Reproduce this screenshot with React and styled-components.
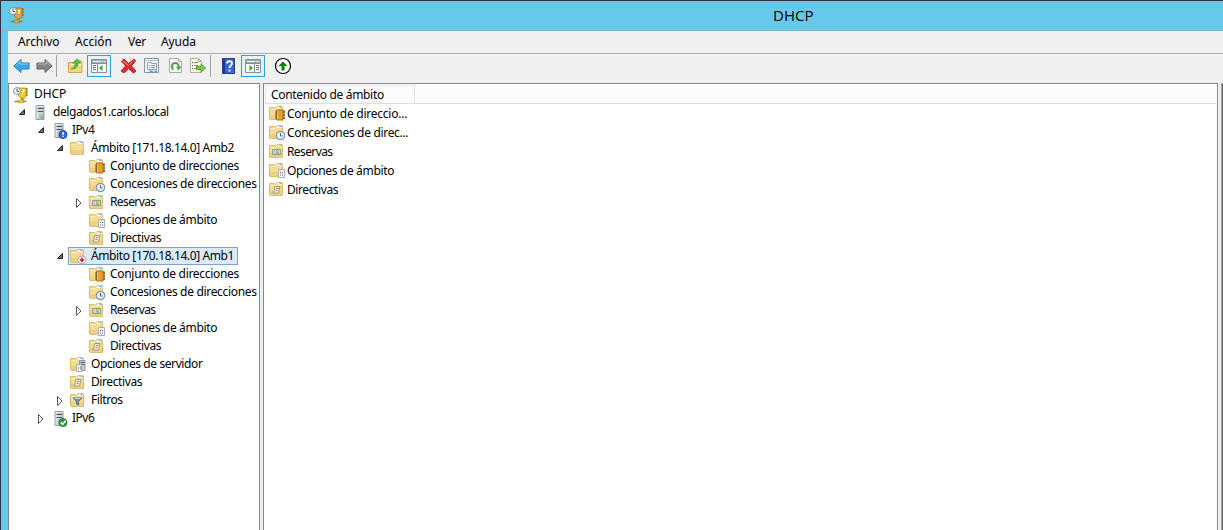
import React from "react";
import styled, { createGlobalStyle } from "styled-components";

const Global = createGlobalStyle`
  * { box-sizing: border-box; }
  html, body { margin: 0; overflow: hidden; background: #66c9ea; }
  body { font-family: "Noto Sans", "Open Sans", sans-serif; font-size: 12px; color: #000; }
  svg { display: block; flex: none; overflow: visible; }
`;

const Window = styled.div`
  width: 1223px;
  height: 530px;
  overflow: hidden;
  display: flex;
  flex-direction: column;
  background: #66c9ea;
  border-top: 1px solid #2f3238;
  border-left: 1px solid #2f3238;
  padding-left: 7px;
`;
const TitleBar = styled.header`
  height: 30px;
  flex: none;
  display: flex;
  align-items: flex-start;
  border-bottom: 1px solid #84b4c8;
  margin-left: -7px;
  padding: 6px 0 0 8px;
`;
const Title = styled.h1`
  margin: -6px 0 0 748px;
  font-family: "Open Sans", "Noto Sans", sans-serif;
  font-size: 15px;
  font-weight: 400;
  line-height: 28px;
  letter-spacing: ${(p) => p.$spacing}px;
`;
const MenuBar = styled.nav`
  height: 23px;
  flex: none;
  display: flex;
  background: #f0f0f0;
  border-bottom: 1px solid #a9abb2;
  padding-left: 10px;
`;
const MenuItem = styled.span`
  width: ${(p) => p.$width}px;
  line-height: 22px;
  white-space: nowrap;
  letter-spacing: ${(p) => p.$spacing}px;
`;
const ToolBar = styled.div`
  height: 29px;
  flex: none;
  display: flex;
  align-items: center;
  background: #f0f0f0;
  border-top: 1px solid #fafafa;
  padding: 0 0 6px 5px;
`;
const Tool = styled.span`
  width: ${(p) => p.$width}px;
  height: 22px;
  display: flex;
  flex: none;
  align-items: center;
`;
const ToggleTool = styled.span`
  width: 24px;
  height: 22px;
  flex: none;
  margin-right: ${(p) => p.$gap}px;
  padding-left: 3px;
  display: flex;
  align-items: center;
  background: #e6f1fa;
  border: 1px solid #2e9fd9;
`;
const Divider = styled.span`
  width: 1px;
  height: 22px;
  flex: none;
  background: #a2a2a2;
  margin-right: ${(p) => p.$gap}px;
`;
const Body = styled.main`
  flex: 1;
  min-height: 0;
  display: flex;
  background: #f0f0f0;
`;
const TreePane = styled.section`
  width: 252px;
  flex: none;
  background: #fff;
  border: 1px solid #828790;
  border-bottom: 0;
  padding-top: 1px;
`;
const ContentPane = styled.section`
  width: 955px;
  flex: none;
  margin-left: 3px;
  background: #fff;
  border: 1px solid #828790;
  border-bottom: 0;
  padding: 1px 1px 0;
`;
const ActionPane = styled.section`
  flex: 1;
  margin-left: 3px;
  background: #696969;
  border: 1px solid #a0a0a0;
  border-right: 0;
  border-bottom: 0;
`;
const TreeRow = styled.div`
  height: 18px;
  display: flex;
  align-items: center;
  padding-left: ${(p) => (p.$level === 0 ? 2 : 2 + 19 * (p.$level - 1))}px;
`;
const Expander = styled.span`
  width: 19px;
  height: 18px;
  flex: none;
  padding: 5px 0 0 7px;
`;
const Node = styled.span`
  height: 18px;
  display: flex;
  align-items: center;
  border: 1px solid ${(p) => (p.$selected ? "#7da2ce" : "transparent")};
  background: ${(p) => (p.$selected ? "#dcebfc" : "transparent")};
  padding: 0 3px 0 1px;
`;
const TreeIcon = styled.span`
  margin-top: 1px;
  height: 15px;
`;
const Label = styled.span`
  margin-left: ${(p) => p.$gap}px;
  line-height: 16px;
  white-space: nowrap;
  letter-spacing: ${(p) => p.$spacing}px;
`;
const ListHeader = styled.div`
  height: 19px;
  display: flex;
  background: #fcfcfc;
  border-bottom: 1px solid #dedfe1;
`;
const HeaderCell = styled.span`
  width: 150px;
  border: 1px solid #e3e3e3;
  border-bottom: 0;
  padding-left: 5px;
  line-height: 18px;
  letter-spacing: ${(p) => p.$spacing}px;
`;
const ListRow = styled.div`
  height: 19px;
  display: flex;
  align-items: center;
  padding-left: 4px;
`;

const Icon = ({ children, w = 16, h = 16 }) => (
  <svg width={w} height={h} viewBox={`0 0 ${w} ${h}`}>{children}</svg>
);

const FolderShape = () => (
  <>
    <path d="M.5 13V1.500h5l1 1L8 .5h5l.5 1V13z" fill="#f3d98d" stroke="#dcbb69" />
    <path d="M1 3h12v9.500H1z" fill="#f4dc94" />
    <path d="M1 9h12v3.500H1z" fill="#efd080" />
    <path d="M1 3.500h5.500l1-1H13" fill="none" stroke="#fdf0c4" />
    <path d="M8 1.500h4" stroke="#fff" />
    <path d="M10.500 1.500h2" stroke="#6ab0dc" />
    <path d="M1 13.500h13" stroke="#d0ab58" opacity=".6" />
  </>
);
const Book = ({ x = 0, y = 0 }) => (
  <g transform={`translate(${x} ${y})`}>
    <path d="M8 1h2v2.500H8z" fill="#d84b31" />
    <path d="M8 4h2v2.500H8z" fill="#399755" />
    <path d="M8 7h2v2.500H8z" fill="#d84b31" />
    <path d="M1.500.5h6.500v10H1.500z" fill="#e3a030" stroke="#a9701a" />
    <path d="M2.500 1v9" stroke="#f3c568" />
    <path d="M0 2.500h2M0 4.500h2M0 6.500h2M0 8.500h2" stroke="#68543b" />
  </g>
);
const Clock = ({ x, y, r = 4 }) => (
  <g transform={`translate(${x} ${y})`}>
    <circle r={r} fill="#eaf2f8" stroke="#8498a5" strokeWidth="1.200" />
    <path d="M0-2.500V.5H2" fill="none" stroke="#456579" />
  </g>
);
const ServerShape = ({ x = 3.5, y = 0 }) => (
  <g transform={`translate(${x} ${y})`}>
    <path d="M.5.500h8v14h-8z" fill="#b4bfc4" stroke="#939da1" />
    <path d="M1 1h2v13H1z" fill="#dce2e4" />
    <path d="M1 1.500h7" stroke="#e1e6e8" />
    <path d="M2 3.500h5.500M2 6.500h5.500" stroke="#46545b" />
    <path d="M2 5h5.500M2 8h5.500" stroke="#e4e9eb" />
    <path d="M5.500 11.500h2v2h-2z" fill="#55c84b" />
  </g>
);

const DhcpIcon = ({ color = "#e5a33c", edge = "#a9701a" }) => (
  <Icon>
    <path d="M13 1h1.500v2.500H13z" fill="#d84b31" />
    <path d="M13 4h1.500v2.500H13z" fill="#399755" />
    <path d="M13 7h1.500v2H13z" fill="#d84b31" />
    <path d="M5.500 1h7.500v9l-2 1.500H8L5.500 9z" fill={color} stroke={edge} strokeWidth=".8" />
    <path d="M9 3.500h2l-1.500 3.500" fill="none" stroke="#fff3b0" strokeWidth="1.300" />
    <path d="M8 11h2.500v3H8z" fill="#9a8a5e" />
    <path d="M1.500 14.500h12" stroke="#77796e" strokeWidth="1.300" />
    <path d="M5 13h5.500v2.800H5z" fill={color} stroke={edge} strokeWidth=".6" />
    <circle cx="4" cy="4" r="3.500" fill="#f0f4f6" stroke="#8c9599" />
    <path d="M4 1.500V4.500h2" fill="none" stroke="#596970" />
  </Icon>
);

const icons = {
  dhcp: <DhcpIcon color="#ecd21f" edge="#a8941b" />,
  server: <Icon><ServerShape /></Icon>,
  ipv4: (
    <Icon>
      <ServerShape />
      <circle cx="12" cy="11.500" r="4" fill="#2f68de" stroke="#1d4bb2" />
      <path d="M11.300 9h1.500v3h-1.500zM11.300 12.800h1.500V14h-1.500z" fill="#fff" />
    </Icon>
  ),
  ipv6: (
    <Icon>
      <ServerShape />
      <circle cx="12" cy="11.500" r="4" fill="#2ba043" stroke="#1c7c31" />
      <path d="m9.700 11.500 2 2 3-4" fill="none" stroke="#fff" strokeWidth="1.400" />
    </Icon>
  ),
  folder: <Icon><FolderShape /></Icon>,
  pool: <Icon><FolderShape /><Book x={6} y={3.500} /></Icon>,
  leases: <Icon><FolderShape /><Clock x={11.500} y={10.500} r={4.200} /></Icon>,
  reservations: (
    <Icon>
      <FolderShape />
      <path d="M3.500 5.500h8v5h-8z" fill="#f1f5ee" stroke="#949b83" />
      <path d="M4.500 6.500h2v1h-2zM4.500 8.500h2v1h-2z" fill="#77929b" />
      <path d="M7 6.500h2v1H7zM9.500 6.500h1v1h-1zM7 8.500h3.500v1H7z" fill="#2f9448" />
    </Icon>
  ),
  options: (
    <Icon>
      <FolderShape />
      <path d="M9.500 6.500h6v8h-6z" fill="#f7f9fb" stroke="#a6adb5" />
      <path d="M11 9h1v1h-1zM13 9h1v1h-1zM11 11.500h1v1h-1zM13 11.500h1v1h-1z" fill="#4e5870" />
    </Icon>
  ),
  policies: (
    <Icon>
      <FolderShape />
      <path d="M5.500 4.500H11l-1.500 6.500h-5.500v-1.500h1z" fill="#f6eeda" stroke="#a79a7c" />
      <path d="M7 6.500h2.500M6.500 8.500h2" stroke="#9a8d6d" />
    </Icon>
  ),
  scopeDown: (
    <Icon>
      <FolderShape />
      <circle cx="12" cy="11" r="4" fill="#fff" stroke="#b9a9a9" />
      <path d="M11.200 8.500h1.600v1.700h2l-2.800 3.200-2.800-3.200h2z" fill="#d41428" />
    </Icon>
  ),
  serverOptions: (
    <Icon>
      <FolderShape />
      <path d="M9.500 3.500h5.500v10H9.500z" fill="#c3cbcf" stroke="#8d989d" />
      <path d="M10.500 5.500h4M10.500 7.500h4" stroke="#56646b" />
      <path d="M6.500 7.500h5v7h-5z" fill="#fff" stroke="#a6adb5" />
      <path d="M8 9.500h1v1H8zM10 9.500h1v1h-1zM8 11.500h1v1H8zM10 11.500h1v1h-1z" fill="#4e5870" />
    </Icon>
  ),
  filters: (
    <Icon>
      <FolderShape />
      <path d="M3 5h9L8.500 8.500v3.500l-2-1V8.500z" fill="#7990aa" stroke="#56708e" />
      <path d="M4.500 5.500h6" stroke="#c1d2e3" />
    </Icon>
  ),
};

const Arrow = ({ right, fill, edge }) => (
  <Icon w={17}>
    <g transform={right ? "translate(17 0) scale(-1 1)" : undefined}>
      <path d="M.8 8 8 1.500V5h8v6H8v3.500z" fill={fill} stroke={edge} strokeLinejoin="round" />
      <path d="m2.500 7.500 4.500-4v2.500h8" fill="none" stroke="#fff" opacity=".45" />
    </g>
  </Icon>
);
const UpFolder = () => (
  <Icon>
    <path d="M.5 14.500v-10H6l1.500-2h5.500v2h1v10z" fill="#f1d684" stroke="#cda64e" />
    <path d="M1 6.500h12" stroke="#fff0b9" />
    <path d="M3 11c3.500-1 4-3 4-6H4.500L9 .8 12.500 5H10c0 4-2 6-7 6z" fill="#5abf3e" stroke="#39942b" strokeWidth=".6" />
  </Icon>
);
const PaneIcon = ({ mirrored }) => (
  <Icon w={17} h={16}>
    <path d="M.5 1.500h15v13H.5z" fill="#f8fafb" stroke="#89939b" />
    <path d="M1 2h14v3H1z" fill="#a1abb4" />
    <path d="M2 3.500h8" stroke="#eef1f3" />
    <path d="M11 3.500h1M13 3.500h1" stroke="#fff" />
    <path d="M1 5.500h14" stroke="#848e96" />
    <g transform={mirrored ? "translate(16 0) scale(-1 1)" : undefined}>
      <path d="M6.500 6v8" stroke="#7e8991" />
      <path d="M2 7.500h3M2 9.500h3M2 11.500h3" stroke="#697a88" />
      <path d="m11.500 7v6l-3.500-3z" fill="#35a52c" />
    </g>
  </Icon>
);
const DeleteIcon = () => (
  <Icon w={17}>
    <path d="m1.500 3 2.500-2 4.500 4.500L14 1l1.500 2-4 5L16 13l-2.500 2-5-4.500L4 15l-3-2 4.500-5z" fill="#dc2929" stroke="#c02226" strokeLinejoin="round" />
    <path d="m3 3 5.500 4.500 5-5" fill="none" stroke="#f38c84" />
  </Icon>
);
const PropertiesIcon = () => (
  <Icon>
    <path d="M.5.500h14v14H.5z" fill="#f1f4f7" stroke="#8995a0" />
    <path d="M1 2.500h13" stroke="#bac3ca" />
    <path d="M3.500 5.500V4.500H7v1h5.500v6h-9z" fill="#fff" stroke="#94a0a9" />
    <path d="M5 7.500h1M5 9.500h1M7 7.500h4M7 9.500h4" stroke="#7890a7" />
    <path d="M5.500 13.300h3.500M10.500 13.300h2.500" stroke="#29b5de" strokeWidth="1.400" />
  </Icon>
);
const RefreshIcon = () => (
  <Icon w={14}>
    <path d="M.5.500h9l3 3v11H.5z" fill="#f8f8f4" stroke="#a9aaa5" />
    <path d="M9.500.500v3h3" fill="#e1e5e4" stroke="#a9aaa5" />
    <path d="M4.500 11.500A3.500 3.500 0 1 1 9.800 8.500" fill="none" stroke="#43a74b" strokeWidth="2" />
    <path d="M7 8.500h5.500L9.500 12.500z" fill="#3c9f45" />
  </Icon>
);
const ExportIcon = () => (
  <Icon>
    <path d="M.5.500h8l3 3v11H.5z" fill="#fffce9" stroke="#b4af91" />
    <path d="M8.500.500v3h3" fill="none" stroke="#b4af91" />
    <path d="M2 4.500h1M2 7.500h1M2 10.500h1" stroke="#555" />
    <path d="M4 4.500h4M4 7.500h4M4 10.500h4" stroke="#8d8c7b" />
    <path d="M6.500 8.500H11V6l4.500 4-4.500 4v-2.500H6.500z" fill="#7dcb49" stroke="#539e2c" />
  </Icon>
);
const HelpIcon = () => (
  <Icon w={14}>
    <path d="M.5.500h12v15H.5z" fill="#3a66d2" stroke="#223e95" />
    <path d="M1 1h2v14H1z" fill="#183a9c" />
    <path d="M5 5.500c0-3 5-3 5 0 0 2-2.500 2-2.500 4.500M7.500 11.500v2" fill="none" stroke="#fff" strokeWidth="1.800" />
  </Icon>
);
const UpCircle = () => (
  <Icon w={17} h={16}>
    <circle cx="8" cy="8" r="7.500" fill="#fff" stroke="#000" strokeWidth="1.200" />
    <path d="M8 3.500 12.500 8h-3v4.500h-3V8h-3z" fill="#078207" />
  </Icon>
);

const menu = [
  ["Archivo", 57, -0.1], ["Acción", 53, 0], ["Ver", 33, -0.3], ["Ayuda", 40, -0.1],
];
const scopeChildren = [
  [4, "pool", "Conjunto de direcciones", null, -0.3],
  [4, "leases", "Concesiones de direcciones", null, -0.32],
  [4, "reservations", "Reservas", "closed", -0.6],
  [4, "options", "Opciones de ámbito", null, -0.34],
  [4, "policies", "Directivas", null, -0.4],
];
const tree = [
  [0, "dhcp", "DHCP", null, -0.1],
  [1, "server", "delgados1.carlos.local", "open", -0.4],
  [2, "ipv4", "IPv4", "open", -0.5],
  [3, "folder", "Ámbito [171.18.14.0] Amb2", "open", -0.39],
  ...scopeChildren,
  [3, "scopeDown", "Ámbito [170.18.14.0] Amb1", "open", -0.39, true],
  ...scopeChildren,
  [3, "serverOptions", "Opciones de servidor", null, -0.4],
  [3, "policies", "Directivas", null, -0.4],
  [3, "filters", "Filtros", "closed", -0.4],
  [2, "ipv6", "IPv6", "closed", -0.5],
];
const list = [
  ["pool", "Conjunto de direccio...", -0.24],
  ["leases", "Concesiones de direc...", -0.32],
  ["reservations", "Reservas", -0.6],
  ["options", "Opciones de ámbito", -0.34],
  ["policies", "Directivas", -0.4],
];

export default function App() {
  return (
    <Window>
      <Global />
      <TitleBar>
        <DhcpIcon />
        <Title $spacing={0}>DHCP</Title>
      </TitleBar>
      <MenuBar>
        {menu.map(([text, width, spacing]) => (
          <MenuItem key={text} $width={width} $spacing={spacing}>{text}</MenuItem>
        ))}
      </MenuBar>
      <ToolBar>
        <Tool $width={23}><Arrow fill="#35a9e6" edge="#277db5" /></Tool>
        <Tool $width={20}><Arrow right fill="#858585" edge="#666" /></Tool>
        <Divider $gap={11} />
        <Tool $width={19}><UpFolder /></Tool>
        <ToggleTool $gap={9}><PaneIcon /></ToggleTool>
        <Tool $width={24}><DeleteIcon /></Tool>
        <Tool $width={25}><PropertiesIcon /></Tool>
        <Tool $width={21}><RefreshIcon /></Tool>
        <Tool $width={20}><ExportIcon /></Tool>
        <Divider $gap={11} />
        <Tool $width={19}><HelpIcon /></Tool>
        <ToggleTool $gap={10}><PaneIcon mirrored /></ToggleTool>
        <Tool $width={17}><UpCircle /></Tool>
      </ToolBar>
      <Body>
        <TreePane>
          {tree.map(([level, icon, text, state, spacing, selected], i) => (
            <TreeRow key={i} $level={level}>
              {level > 0 && (
                <Expander>
                  {state === "open" && <Icon w={9} h={9}><path d="M6.500 1.500v5h-5z" fill="#6a6a6a" stroke="#262626" /></Icon>}
                  {state === "closed" && <Icon w={9} h={9}><path d="m1.500.500 4.500 4.500-4.500 4.500z" fill="#fff" stroke="#555" /></Icon>}
                </Expander>
              )}
              <Node $selected={selected}>
                <TreeIcon>{icons[icon]}</TreeIcon>
                <Label $gap={5} $spacing={spacing}>{text}</Label>
              </Node>
            </TreeRow>
          ))}
        </TreePane>
        <ContentPane>
          <ListHeader><HeaderCell $spacing={-0.32}>Contenido de ámbito</HeaderCell></ListHeader>
          {list.map(([icon, text, spacing]) => (
            <ListRow key={text}>
              {icons[icon]}
              <Label $gap={2} $spacing={spacing}>{text}</Label>
            </ListRow>
          ))}
        </ContentPane>
        <ActionPane />
      </Body>
    </Window>
  );
}
